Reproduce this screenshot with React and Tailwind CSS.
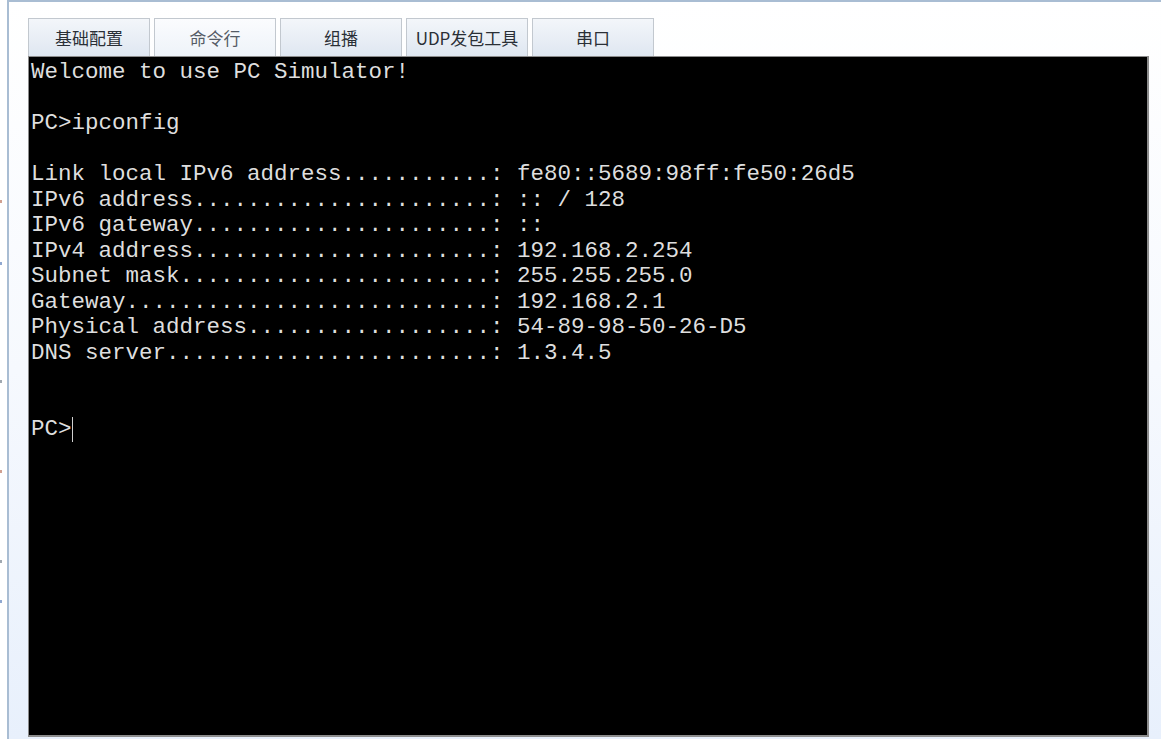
import React from "react";

const lines = [
  "Welcome to use PC Simulator!",
  "",
  "PC>ipconfig",
  "",
  "Link local IPv6 address...........: fe80::5689:98ff:fe50:26d5",
  "IPv6 address......................: :: / 128",
  "IPv6 gateway......................: ::",
  "IPv4 address......................: 192.168.2.254",
  "Subnet mask.......................: 255.255.255.0",
  "Gateway...........................: 192.168.2.1",
  "Physical address..................: 54-89-98-50-26-D5",
  "DNS server........................: 1.3.4.5",
  "",
  "",
];

const tabs = ["基础配置", "命令行", "组播", "UDP发包工具", "串口"];

export default function App() {
  return (
    <div
      className="w-[1161px] h-[739px] flex bg-white overflow-hidden"
      style={{ fontFamily: '"Noto Sans CJK SC", "Noto Sans", sans-serif' }}
    >
      <div className="w-[7px] h-full bg-white relative overflow-hidden">
        <div className="absolute left-0 top-[200px] w-[2px] h-[3px] bg-[#d0a090]" />
        <div className="absolute left-0 top-[262px] w-[2px] h-[3px] bg-[#90a8d0]" />
        <div className="absolute left-0 top-[380px] w-[2px] h-[3px] bg-[#a0a8b0]" />
        <div className="absolute left-0 top-[470px] w-[2px] h-[3px] bg-[#d0a090]" />
        <div className="absolute left-0 top-[560px] w-[2px] h-[3px] bg-[#a0a8b0]" />
        <div className="absolute left-0 top-[600px] w-[2px] h-[3px] bg-[#90a8d0]" />
      </div>
      <div className="flex-1 h-full border-l-2 border-t-2 border-[#a9bdd3] bg-gradient-to-b from-white via-[#f6f9fe] to-[#e8f0fc] pl-[19px] pt-[16px] flex flex-col">
        <div className="flex gap-[4px] h-[38px]">
          {tabs.map((t, i) => (
            <div
              key={t}
              className={
                "w-[122px] h-[38px] border border-b-0 border-[#c2c8cf] flex items-center justify-center text-[17px] " +
                (i === 1
                  ? "bg-gradient-to-b from-[#fbfcfe] to-[#eef3f9] text-[#555c66]"
                  : "bg-gradient-to-b from-[#f3f6fa] to-[#dfe7f1] text-[#2a2f36]")
              }
            >
              {t}
            </div>
          ))}
        </div>
        <div className="w-[1121px] h-[681px] bg-black border border-[#8c8c8c] border-r-2 border-b-2 pl-[2px] pt-[3px]">
          <div
            className="text-[22.5px] leading-[25.5px] text-[#dedede] whitespace-pre"
            style={{ fontFamily: '"Liberation Mono", "Courier New", monospace' }}
          >
            {lines.map((l, i) => (
              <div key={i} className="h-[25.5px]">
                {l}
              </div>
            ))}
            <div className="h-[25.5px] flex items-center">
              <span>PC&gt;</span>
              <span className="inline-block w-[1px] h-[25px] bg-[#d0d0d0]" />
            </div>
          </div>
        </div>
      </div>
    </div>
  );
}
